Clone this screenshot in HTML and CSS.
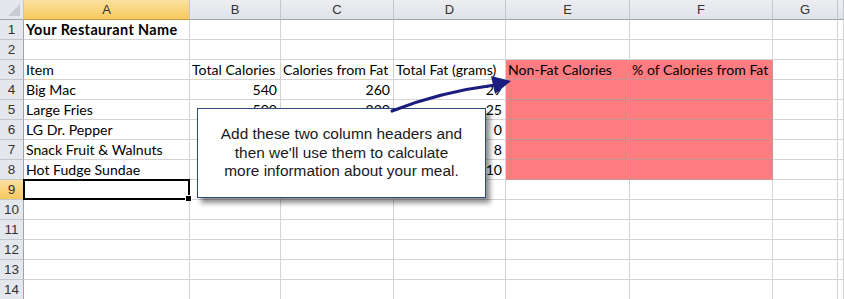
FILE: index.html
```html
<!DOCTYPE html>
<html lang="en">
<head>
    <meta charset="UTF-8">
    <title>Restaurant calories</title>
    <link rel="stylesheet" href="styles.css">
</head>
<body>
    <div class="sheet">
        <!-- column headers -->
        <div class="row">
            <div class="corner"></div>
            <div class="ch on">A</div><div class="ch">B</div><div class="ch">C</div><div class="ch">D</div>
            <div class="ch">E</div><div class="ch">F</div><div class="ch">G</div><div class="ch"></div>
        </div>
        <div class="row">
            <div class="rh">1</div>
            <div class="c bold">Your Restaurant Name</div><div class="c"></div><div class="c"></div><div class="c"></div>
            <div class="c"></div><div class="c"></div><div class="c"></div><div class="c"></div>
        </div>
        <div class="row">
            <div class="rh">2</div>
            <div class="c"></div><div class="c"></div><div class="c"></div><div class="c"></div>
            <div class="c"></div><div class="c"></div><div class="c"></div><div class="c"></div>
        </div>
        <div class="row">
            <div class="rh">3</div>
            <div class="c">Item</div><div class="c">Total Calories</div><div class="c">Calories from Fat</div><div class="c">Total Fat (grams)</div>
            <div class="c red">Non-Fat Calories</div><div class="c red">% of Calories from Fat</div><div class="c"></div><div class="c"></div>
        </div>
        <div class="row">
            <div class="rh">4</div>
            <div class="c">Big Mac</div><div class="c num">540</div><div class="c num">260</div><div class="c num">29</div>
            <div class="c red"></div><div class="c red"></div><div class="c"></div><div class="c"></div>
        </div>
        <div class="row">
            <div class="rh">5</div>
            <div class="c">Large Fries</div><div class="c num">500</div><div class="c num">220</div><div class="c num">25</div>
            <div class="c red"></div><div class="c red"></div><div class="c"></div><div class="c"></div>
        </div>
        <!-- B and C of rows 6-8 sit under the note -->
        <div class="row">
            <div class="rh">6</div>
            <div class="c">LG Dr. Pepper</div><div class="c"></div><div class="c"></div><div class="c num">0</div>
            <div class="c red"></div><div class="c red"></div><div class="c"></div><div class="c"></div>
        </div>
        <div class="row">
            <div class="rh">7</div>
            <div class="c">Snack Fruit &amp; Walnuts</div><div class="c"></div><div class="c"></div><div class="c num">8</div>
            <div class="c red"></div><div class="c red"></div><div class="c"></div><div class="c"></div>
        </div>
        <div class="row">
            <div class="rh">8</div>
            <div class="c">Hot Fudge Sundae</div><div class="c"></div><div class="c"></div><div class="c num">10</div>
            <div class="c red"></div><div class="c red"></div><div class="c"></div><div class="c"></div>
        </div>
        <div class="row">
            <div class="rh on">9</div>
            <div class="c sel"></div><div class="c"></div><div class="c"></div><div class="c"></div>
            <div class="c"></div><div class="c"></div><div class="c"></div><div class="c"></div>
        </div>
        <div class="row">
            <div class="rh">10</div>
            <div class="c"></div><div class="c"></div><div class="c"></div><div class="c"></div>
            <div class="c"></div><div class="c"></div><div class="c"></div><div class="c"></div>
        </div>
        <div class="row">
            <div class="rh">11</div>
            <div class="c"></div><div class="c"></div><div class="c"></div><div class="c"></div>
            <div class="c"></div><div class="c"></div><div class="c"></div><div class="c"></div>
        </div>
        <div class="row">
            <div class="rh">12</div>
            <div class="c"></div><div class="c"></div><div class="c"></div><div class="c"></div>
            <div class="c"></div><div class="c"></div><div class="c"></div><div class="c"></div>
        </div>
        <div class="row">
            <div class="rh">13</div>
            <div class="c"></div><div class="c"></div><div class="c"></div><div class="c"></div>
            <div class="c"></div><div class="c"></div><div class="c"></div><div class="c"></div>
        </div>
        <div class="row">
            <div class="rh">14</div>
            <div class="c"></div><div class="c"></div><div class="c"></div><div class="c"></div>
            <div class="c"></div><div class="c"></div><div class="c"></div><div class="c"></div>
        </div>
    </div>

    <div class="callout">
        <p>Add these two column headers and<br>then we'll use them to calculate<br>more information about your meal.</p>
    </div>

    <svg class="arrow" width="844" height="299" viewBox="0 0 844 299">
        <path d="M392 111 Q440 92 495 85" fill="none" stroke="#1b1d7e" stroke-width="3.2" stroke-linecap="round"/>
        <polygon points="511,81 491,76 495,94" fill="#1b1d7e"/>
    </svg>
</body>
</html>
```

FILE: styles.css
```css
*{
    margin: 0;
    padding: 0;
    box-sizing: border-box;
}
body{
    width: 844px;
    height: 299px;
    overflow: hidden;
    position: relative;
    background: #fff;
    font-family: Lato, "Liberation Sans", sans-serif;
}
.sheet{
    display: grid;
    grid-template-columns: 24px 166px 91px 113px 112px 124px 143px 65px 1fr;
    grid-auto-rows: 20px;
}
.row{
    display: contents;
}
.corner{
    position: relative;
    background: #e4e7eb;
    border-right: 1px solid #c3c7cd;
    border-bottom: 1px solid #9ea4ad;
}
.corner::after{
    content: '';
    position: absolute;
    right: 3px;
    bottom: 3px;
    border-left: 12px solid transparent;
    border-bottom: 12px solid #c8ccd1;
}
.ch{
    background: linear-gradient(#eceef1, #dfe3e8);
    border-right: 1px solid #c3c7cd;
    border-bottom: 1px solid #9ea4ad;
    color: #333;
    font-family: "Liberation Sans", sans-serif;
    font-size: 13px;
    line-height: 19px;
    text-align: center;
}
.ch.on{
    background: linear-gradient(#fbe19f, #f6c85f);
    border-bottom-color: #c29b4b;
}
.rh{
    background: #e4e7eb;
    border-right: 1px solid #9ea4ad;
    border-bottom: 1px solid #c3c7cd;
    color: #333;
    font-family: "Liberation Sans", sans-serif;
    font-size: 13.5px;
    line-height: 20px;
    text-align: center;
}
.rh.on{
    background: linear-gradient(#fbe19f, #f6c85f);
    border-right-color: #c29b4b;
}
.c{
    border-right: 1px solid #d4d4d4;
    border-bottom: 1px solid #d4d4d4;
    padding: 0 3px 0 2px;
    font-size: 14.1px;
    line-height: 20px;
    color: #000;
    white-space: nowrap;
}
.bold{
    font-weight: bold;
    font-size: 14.4px;
    letter-spacing: 0.4px;
}
.num{
    text-align: right;
}
.red{
    background: #ff7c80;
    border-color: #c99396;
}
.sel{
    position: relative;
}
.sel::before{
    content: '';
    position: absolute;
    left: -1px;
    top: -1px;
    right: -1px;
    bottom: -1px;
    border: 2px solid #000;
}
.sel::after{
    content: '';
    position: absolute;
    right: -3px;
    bottom: -3px;
    width: 5px;
    height: 5px;
    background: #000;
    border: 1px solid #fff;
}
.callout{
    position: absolute;
    left: 197px;
    top: 108px;
    width: 289px;
    height: 90px;
    background: #fff;
    border: 1px solid #2c4a7c;
    box-shadow: 4px 5px 5px rgba(0, 0, 0, 0.45);
    display: flex;
    align-items: center;
    justify-content: center;
}
.callout p{
    font-family: "Liberation Sans", Arial, sans-serif;
    font-size: 15.4px;
    line-height: 18.5px;
    color: #1a1a1a;
    text-align: center;
}
.arrow{
    position: absolute;
    left: 0;
    top: 0;
    pointer-events: none;
}
```
